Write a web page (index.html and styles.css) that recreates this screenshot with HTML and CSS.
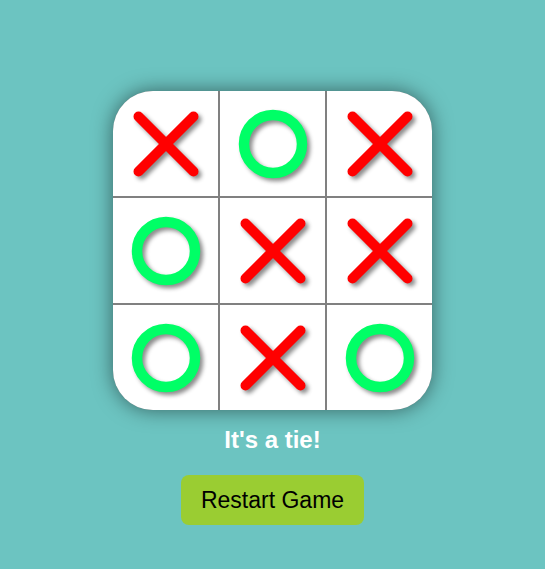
FILE: index.html
```html
<!DOCTYPE html>
<html lang="en">
<head>
<meta charset="utf-8">
<title>Tic Tac Toe</title>
<link rel="stylesheet" href="styles.css">
</head>
<body>
<main class="game">
  <div class="board">
    <div class="cell"><svg class="mark x" viewBox="0 0 70 70"><line x1="7.5" y1="7.5" x2="62.5" y2="62.5"/><line x1="62.5" y1="7.5" x2="7.5" y2="62.5"/></svg></div>
    <div class="cell"><svg class="mark o" viewBox="0 0 70 70"><circle cx="35" cy="35" r="29"/></svg></div>
    <div class="cell"><svg class="mark x" viewBox="0 0 70 70"><line x1="7.5" y1="7.5" x2="62.5" y2="62.5"/><line x1="62.5" y1="7.5" x2="7.5" y2="62.5"/></svg></div>
    <div class="cell"><svg class="mark o" viewBox="0 0 70 70"><circle cx="35" cy="35" r="29"/></svg></div>
    <div class="cell"><svg class="mark x" viewBox="0 0 70 70"><line x1="7.5" y1="7.5" x2="62.5" y2="62.5"/><line x1="62.5" y1="7.5" x2="7.5" y2="62.5"/></svg></div>
    <div class="cell"><svg class="mark x" viewBox="0 0 70 70"><line x1="7.5" y1="7.5" x2="62.5" y2="62.5"/><line x1="62.5" y1="7.5" x2="7.5" y2="62.5"/></svg></div>
    <div class="cell"><svg class="mark o" viewBox="0 0 70 70"><circle cx="35" cy="35" r="29"/></svg></div>
    <div class="cell"><svg class="mark x" viewBox="0 0 70 70"><line x1="7.5" y1="7.5" x2="62.5" y2="62.5"/><line x1="62.5" y1="7.5" x2="7.5" y2="62.5"/></svg></div>
    <div class="cell"><svg class="mark o" viewBox="0 0 70 70"><circle cx="35" cy="35" r="29"/></svg></div>
  </div>
  <p class="status">It's a tie!</p>
  <button class="restart" type="button">Restart Game</button>
</main>
</body>
</html>
```
FILE: styles.css
```css
html, body {
  margin: 0;
  padding: 0;
}
body {
  background: #6cc4c1;
  font-family: "Liberation Sans", Arial, sans-serif;
  height: 569px;
  overflow: hidden;
}
.game {
  display: flex;
  flex-direction: column;
  align-items: center;
  padding-top: 91px;
}
.board {
  display: grid;
  grid-template-columns: repeat(3, 105px);
  grid-template-rows: repeat(3, 105px);
  gap: 2px;
  background: #808080;
  border-radius: 40px;
  overflow: hidden;
  box-shadow: 0 0 20px rgba(0, 0, 0, 0.5);
}
.cell {
  background: #ffffff;
  display: flex;
  align-items: center;
  justify-content: center;
}
.mark {
  width: 70px;
  height: 70px;
  overflow: visible;
  filter: drop-shadow(3px 3px 2px rgba(0, 0, 0, 0.45));
}
.mark.x line {
  stroke: #ff0000;
  stroke-width: 10;
  stroke-linecap: round;
}
.mark.o circle {
  fill: none;
  stroke: #00ff66;
  stroke-width: 10.5;
}
.status {
  margin: 16px 0 0;
  color: #ffffff;
  font-weight: bold;
  font-size: 24px;
  line-height: 28px;
}
.restart {
  margin-top: 21px;
  font-family: "Liberation Sans", Arial, sans-serif;
  font-size: 23px;
  color: #000000;
  background: #9acd32;
  border: none;
  border-radius: 8px;
  padding: 12px 19.5px;
  line-height: 26px;
}
```
